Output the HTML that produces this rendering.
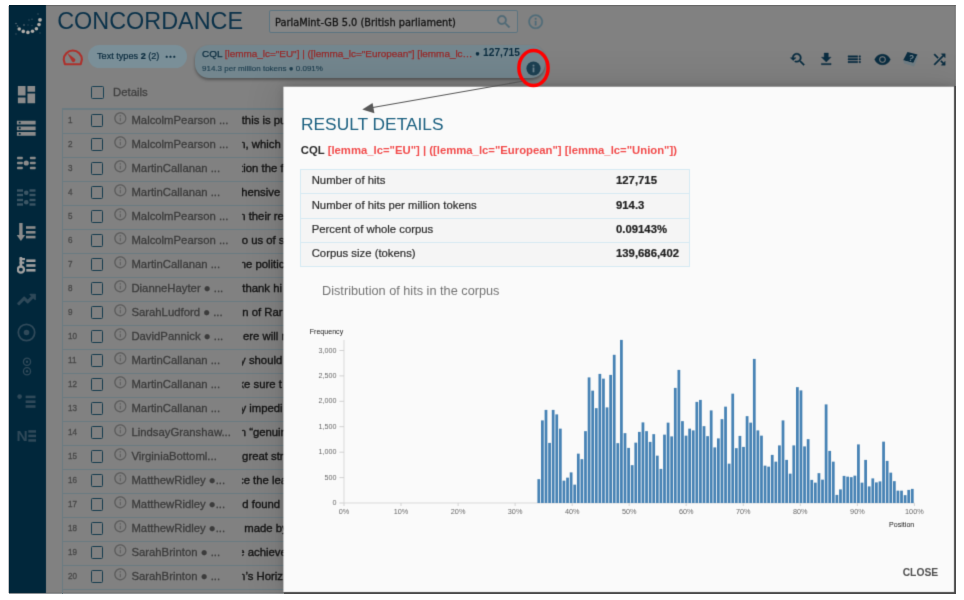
<!DOCTYPE html>
<html lang="en"><head><meta charset="utf-8"><title>Concordance - Result details</title>
<style>
*{box-sizing:border-box}
html,body{margin:0;padding:0}
body{width:964px;height:600px;background:#fff;position:relative;overflow:hidden;font-family:"Liberation Sans",Arial,sans-serif;}
.a{position:absolute}
#shot{left:9px;top:5px;width:947px;height:589px;overflow:hidden;filter:url(#soft)}
#bg{left:0;top:0;width:946px;height:588px;background:#818181}
#side{left:0;top:0;width:37px;height:588px;background:#01273b}
#title{left:48.2px;top:1.3px;font-size:23.4px;line-height:30px;color:#0a3149;white-space:nowrap}
#sel{left:260.3px;top:4.8px;width:249px;height:22.8px;border:1.5px solid #5b7480;border-radius:2px;background:#868686}
#seltxt{-webkit-text-stroke:.3px;left:266px;top:5.6px;height:23px;line-height:23px;font-size:10.9px;color:#141414;white-space:nowrap;font-family:"DejaVu Sans Condensed","DejaVu Sans","Liberation Sans",sans-serif}
.chip{background:#7a8f98;border-radius:12px}
.row{left:53.4px;width:892px;height:24px;border-top:1px solid #6a7a81;border-left:1px solid #6a7a81}
.r1{box-shadow:0 -1px 0 #6a7a81}
.r1:before{content:'';position:absolute;left:-1px;top:-1.5px;width:1px;height:2px;background:#6a7a81}
.num{left:5px;top:-2.9px;height:24px;line-height:25px;font-size:9.4px;color:#4a4a4a;-webkit-text-stroke:.35px;transform:scaleX(.86);transform-origin:0 50%}
.cb{left:27.2px;top:4.1px;width:12.3px;height:12.9px;border:1.6px solid #153b4d;border-radius:1.5px}
.nm{left:68px;top:-2.4px;height:24px;line-height:24px;font-size:11.33px;color:#3c3c3c;-webkit-text-stroke:.3px;white-space:nowrap}
.kw{left:179.1px;top:-2.4px;width:60px;height:24px;line-height:24px;font-size:11.33px;color:#141414;-webkit-text-stroke:.35px;white-space:nowrap;overflow:hidden}
.kw span{position:absolute;top:0}
.ii{left:50.1px;top:0.7px}
#modal{left:275px;top:82px;width:670px;height:505px;background:#fafafa;box-shadow:0 0 9px rgba(0,0,0,.2),0 2px 34px 6px rgba(0,0,0,.11)}
#mt{left:17px;top:25.7px;font-size:17.33px;line-height:22px;color:#1b6080;white-space:nowrap}
#cql{left:16.8px;top:54.8px;font-size:11.32px;line-height:16px;font-weight:bold;color:#2b2b2b;white-space:nowrap}
#cql span{color:#f24c4c}
table{-webkit-text-stroke:.2px;position:absolute;left:16px;top:82px;border-collapse:collapse;font-size:11.33px;color:#2d2d2d}
td{border:1px solid #d6eaf3;height:24.25px;padding:0 0 2.6px 10.7px;background:#f5f5f5;white-space:nowrap}
td.v{font-weight:bold;border-left:none;width:73.5px;color:#222;padding-left:0}
td.k{border-right:none;width:315.5px}
#dist{left:38px;top:195.7px;font-size:12.73px;line-height:16px;color:#757575;white-space:nowrap}
#close{left:618.7px;top:478.8px;font-size:10.3px;line-height:14px;color:#4f4f4f;font-weight:bold}
</style></head>
<body>
<svg width="0" height="0" style="position:absolute"><defs><filter id="soft" x="0" y="0" width="100%" height="100%" color-interpolation-filters="sRGB"><feConvolveMatrix order="3" kernelMatrix="0 1 0 1 5 1 0 1 0" divisor="9" edgeMode="duplicate" preserveAlpha="true"/></filter></defs></svg>
<div class="a" style="left:8px;top:6px;width:1px;height:587px;background:rgba(40,40,50,.28)"></div>
<div id="shot" class="a">
<div id="bg" class="a"></div>
<div class="a" style="left:946px;top:0;width:1px;height:589px;background:rgba(80,80,80,.7)"></div><div class="a" style="left:0;top:588px;width:947px;height:1px;background:rgba(50,55,60,.55)"></div>
<div id="side" class="a"></div>
<svg class="a" style="left:0;top:0" width="37" height="40" viewBox="0 0 37 40"><circle cx="10.25" cy="24" r="1.8" fill="#b0aca8"/><circle cx="14.25" cy="26.4" r="1.8" fill="#b0aca8"/><circle cx="18.9" cy="27.4" r="1.8" fill="#b0aca8"/><circle cx="23.5" cy="26.2" r="1.8" fill="#b0aca8"/><circle cx="27.4" cy="23.8" r="1.8" fill="#b0aca8"/><circle cx="30" cy="19.6" r="1.8" fill="#b0aca8"/><circle cx="31" cy="14.8" r="1.9" fill="#b0aca8"/><circle cx="7" cy="18.5" r="0.8" fill="#5d6d76"/><circle cx="8.5" cy="21" r="0.8" fill="#5d6d76"/><circle cx="15" cy="20" r="0.9" fill="#4a5d68"/><circle cx="20" cy="15" r="0.8" fill="#35505f"/><circle cx="23" cy="14.3" r="0.8" fill="#35505f"/><circle cx="19" cy="20" r="0.8" fill="#2a4758"/><circle cx="23" cy="20.5" r="0.8" fill="#2a4758"/><circle cx="29" cy="9" r="0.8" fill="#3c5563"/><circle cx="7" cy="29" r="0.7" fill="#4a5d68"/><circle cx="31" cy="28" r="0.7" fill="#3c5563"/></svg>
<svg class="a" style="left:6.1px;top:78.2px" width="23" height="23" viewBox="0 0 24 24"><path d="M3 13h8V3H3v10zm0 8h8v-6H3v6zm10 0h8V11h-8v10zm0-18v6h8V3h-8z" fill="#8b8b8b"/></svg>
<svg class="a" style="left:6.35px;top:112.45px" width="22.5" height="22.5" viewBox="0 0 24 24"><path d="M2 20h20v-4H2v4zm2-3h2v2H4v-2zM2 4v4h20V4H2zm4 3H4V5h2v2zm-4 7h20v-4H2v4zm2-3h2v2H4v-2z" fill="#8b8b8b"/></svg>
<svg class="a" style="left:8.35px;top:149.3px" width="18.5" height="18" viewBox="0 0 18.5 18"><rect x="0" y="2.65" width="5.8" height="2.7" rx=".8" fill="#8b8b8b"/><rect x="12.9" y="2.65" width="5.8" height="2.7" rx=".8" fill="#8b8b8b"/><rect x="0" y="7.65" width="5.8" height="2.7" rx=".8" fill="#8b8b8b"/><rect x="12.9" y="7.65" width="5.8" height="2.7" rx=".8" fill="#8b8b8b"/><rect x="0" y="12.65" width="5.8" height="2.7" rx=".8" fill="#8b8b8b"/><rect x="12.9" y="12.65" width="5.8" height="2.7" rx=".8" fill="#8b8b8b"/><circle cx="9.25" cy="9" r="2.6" fill="#8b8b8b"/></svg>
<svg class="a" style="left:8.35px;top:183.55px" width="18.5" height="17.5" viewBox="0 0 18.5 17.5"><rect x="0" y="0.30000000000000004" width="6" height="2.4" fill="#3b5564"/><rect x="12.5" y="0.30000000000000004" width="6" height="2.4" fill="#3b5564"/><rect x="0" y="4.8" width="6" height="2.4" fill="#3b5564"/><rect x="12.5" y="4.8" width="6" height="2.4" fill="#3b5564"/><circle cx="9.25" cy="3.8" r="2.3" fill="#3b5564"/><rect x="0" y="9.8" width="6" height="2.4" fill="#3b5564"/><rect x="12.5" y="9.8" width="6" height="2.4" fill="#3b5564"/><rect x="0" y="14.3" width="6" height="2.4" fill="#3b5564"/><rect x="12.5" y="14.3" width="6" height="2.4" fill="#3b5564"/><circle cx="9.25" cy="13.3" r="2.3" fill="#3b5564"/></svg>
<svg class="a" style="left:8.35px;top:217.6px" width="18.5" height="18" viewBox="0 0 18.5 18"><path d="M2.2 0h3.4v12h2.6l-4.3 6l-4.3-6h2.6z" fill="#8b8b8b"/><rect x="9" y="3.2" width="9.5" height="2.6" fill="#8b8b8b"/><rect x="9" y="8" width="9.5" height="2.6" fill="#8b8b8b"/><rect x="9" y="12.8" width="9.5" height="2.6" fill="#8b8b8b"/></svg>
<svg class="a" style="left:8.35px;top:252px" width="18.5" height="17" viewBox="0 0 18.5 17"><rect x="2.6" y="0" width="2.6" height="10" fill="#a0a0a0"/><rect x="2.6" y="1" width="5.4" height="2.2" fill="#a0a0a0"/><rect x="2.6" y="4.6" width="4.6" height="2.2" fill="#a0a0a0"/><circle cx="3.9" cy="12.6" r="3.1" fill="none" stroke="#a0a0a0" stroke-width="2.3"/><rect x="9.3" y="2.4" width="9.2" height="2.6" fill="#a0a0a0"/><rect x="9.3" y="7.2" width="9.2" height="2.6" fill="#a0a0a0"/><rect x="9.3" y="12" width="9.2" height="2.6" fill="#a0a0a0"/></svg>
<svg class="a" style="left:7.3px;top:284.1px" width="21" height="21" viewBox="0 0 24 24" stroke="#2f4959" stroke-width="1.3" stroke-linejoin="round"><path d="M16 6l2.29 2.29-4.88 4.88-4-4L2 16.59 3.41 18l6-6 4 4 6.3-6.29L22 12V6z" fill="#2f4959"/></svg>
<svg class="a" style="left:8.1px;top:318.3px" width="19" height="19" viewBox="0 0 19 19"><circle cx="9.5" cy="9.5" r="8.2" fill="none" stroke="#2f4959" stroke-width="1.8"/><circle cx="9.5" cy="9.5" r="2.8" fill="#2f4959"/></svg>
<svg class="a" style="left:12.6px;top:352.2px" width="10" height="19" viewBox="0 0 10 19"><circle cx="5" cy="4.8" r="3.6" fill="none" stroke="#2f4959" stroke-width="1.3"/><circle cx="5" cy="4.8" r="1.2" fill="#2f4959"/><circle cx="5" cy="14.2" r="3.6" fill="none" stroke="#2f4959" stroke-width="1.3"/><circle cx="5" cy="14.2" r="1.2" fill="#2f4959"/></svg>
<svg class="a" style="left:8.35px;top:388.5px" width="18.5" height="14" viewBox="0 0 18.5 14"><circle cx="2.6" cy="2.6" r="2.3" fill="#2f4959"/><rect x="8.6" y="1.6" width="9.9" height="2.6" fill="#2f4959"/><rect x="8.6" y="6.4" width="9.9" height="2.6" fill="#2f4959"/><rect x="8.6" y="11.2" width="9.9" height="2.6" fill="#2f4959"/></svg>
<svg class="a" style="left:8.1px;top:423.8px" width="19" height="13" viewBox="0 0 19 13"><text x="-0.6" y="12" font-size="15.5" font-weight="bold" font-family="Liberation Sans, Arial, sans-serif" fill="#2f4959">N</text><rect x="11.3" y="1.2" width="7.7" height="2.5" fill="#2f4959"/><rect x="11.3" y="5.7" width="7.7" height="2.5" fill="#2f4959"/><rect x="11.3" y="10.2" width="7.7" height="2.5" fill="#2f4959"/></svg>
<div id="title" class="a">CONCORDANCE</div>
<div id="sel" class="a"></div><div id="seltxt" class="a">ParlaMint-GB 5.0 (British parliament)</div>
<svg class="a" style="left:485.55px;top:7.95px" width="17.5" height="17.5" viewBox="0 0 24 24" stroke="#506a76" stroke-width=".5"><path d="M15.5 14h-.79l-.28-.27C15.41 12.59 16 11.11 16 9.5 16 5.91 13.09 3 9.5 3S3 5.91 3 9.5 5.91 16 9.5 16c1.61 0 3.09-.59 4.23-1.57l.27.28v.79l5 4.99L20.49 19l-4.99-5zm-6 0C7.01 14 5 11.99 5 9.5S7.01 5 9.5 5 14 7.01 14 9.5 11.99 14 9.5 14z" fill="#506a76"/></svg>
<svg class="a" style="left:518.25px;top:8.05px" width="17.3" height="17.3" viewBox="0 0 24 24" stroke="#506c79" stroke-width=".5"><path d="M11 17h2v-6h-2v6zm1-15C6.48 2 2 6.48 2 12s4.48 10 10 10 10-4.48 10-10S17.52 2 12 2zm0 18c-4.41 0-8-3.59-8-8s3.59-8 8-8 8 3.59 8 8-3.59 8-8 8zM11 9h2V7h-2v2z" fill="#506c79"/></svg>
<svg class="a" style="left:0;top:0" width="100" height="80" viewBox="9 5 100 80"><path d="M64.9 64.3 L63.7 59.6 A9.1 9.1 0 0 1 81.9 59.6 L80.7 64.3 Z" fill="none" stroke="#ad312c" stroke-width="2.1" stroke-linejoin="round"/><path d="M67.2 53 L74.6 58.6 A1.9 1.9 0 1 1 71.9 61.2 Z" fill="#ad312c"/></svg>
<div class="a chip" style="left:79.3px;top:40px;width:99px;height:22.6px"></div>
<div class="a" style="left:88px;top:40px;height:22.6px;line-height:22.6px;font-size:9.15px;color:#0b2c3f;-webkit-text-stroke:.2px;white-space:nowrap">Text types <b>2</b> (2) <span style="letter-spacing:1px;font-size:4.6px;position:relative;top:-1.2px;left:3.5px">●●●</span></div>
<div class="a chip" style="left:186px;top:40px;width:350px;height:33px;border-radius:14px;background:#73868e;box-shadow:0 2px 3px rgba(0,0,0,.35)"></div>
<div class="a" style="left:193px;top:41.5px;height:14px;line-height:14px;font-size:9.94px;color:#0b2c3f;white-space:nowrap;-webkit-text-stroke:.25px">CQL <span style="color:#982a2a">[lemma_lc="EU"] | ([lemma_lc="European"] [lemma_lc…</span> <span style="font-size:7.5px;position:relative;top:-1px">●</span></div>
<div class="a" style="left:440px;width:70.9px;text-align:right;top:40.6px;height:14px;line-height:14px;font-size:10.2px;font-weight:bold;color:#0b2c3f;white-space:nowrap">127,715</div>
<div class="a" style="left:193px;top:58.7px;height:10px;line-height:10px;font-size:8px;color:#1f3f50;-webkit-text-stroke:.15px;white-space:nowrap">914.3 per million tokens ● 0.091%</div>
<svg class="a" style="left:516.5px;top:55.5px" width="15" height="15" viewBox="0 0 15 15"><circle cx="7.5" cy="7.5" r="7.1" fill="#1c4052"/><rect x="6.6" y="6.5" width="1.8" height="4.8" fill="#6c838e"/><rect x="6.6" y="3.7" width="1.8" height="1.8" fill="#6c838e"/></svg>
<svg class="a" style="left:780px;top:45.8px" width="17" height="17" viewBox="0 0 24 24" stroke="#0a2d41" stroke-width=".6"><path d="M17.01 14h-.8l-.27-.27c.98-1.14 1.57-2.61 1.57-4.23 0-3.59-2.91-6.5-6.5-6.5s-6.5 3-6.5 6.5H2l3.84 4 4.16-4H6.51C6.51 7 8.53 5 11.01 5s4.5 2.01 4.5 4.5c0 2.48-2.02 4.5-4.5 4.5-.65 0-1.26-.14-1.82-.38L7.71 15.1c.97.57 2.09.9 3.3.9 1.61 0 3.08-.59 4.22-1.57l.27.27v.79l5.01 4.99L22 19l-4.99-5z" fill="#0a2d41"/></svg>
<svg class="a" style="left:808.75px;top:45.75px" width="16.5" height="16.5" viewBox="0 0 24 24" stroke="#0a2d41" stroke-width=".6"><path d="M19 9h-4V3H9v6H5l7 7 7-7zM5 18v2h14v-2H5z" fill="#0a2d41"/></svg>
<svg class="a" style="left:837.25px;top:46.45px" width="16.5" height="16.5" viewBox="0 0 24 24" stroke="#0a2d41" stroke-width=".6"><path d="M3 9h14V7H3v2zm0 4h14v-2H3v2zm0 4h14v-2H3v2zm16 0h2v-2h-2v2zm0-10v2h2V7h-2zm0 6h2v-2h-2v2z" fill="#0a2d41"/></svg>
<svg class="a" style="left:865.2px;top:46px" width="17" height="17" viewBox="0 0 24 24" stroke="#0a2d41" stroke-width=".6"><path d="M12 4.5C7 4.5 2.73 7.61 1 12c1.73 4.39 6 7.5 11 7.5s9.27-3.11 11-7.5c-1.73-4.39-6-7.5-11-7.5zM12 17c-2.76 0-5-2.24-5-5s2.24-5 5-5 5 2.24 5 5-2.24 5-5 5zm0-8c-1.66 0-3 1.34-3 3s1.34 3 3 3 3-1.34 3-3-1.34-3-3-3z" fill="#0a2d41"/></svg>
<svg class="a" style="left:892.5px;top:45.5px" width="17" height="17" viewBox="0 0 17 17"><path d="M5.5 1 L15.5 3.6 L11.3 12 L1.2 9.2 Z" fill="#0a2d41"/><path d="M1.2 9.2 L11.3 12 L15.5 3.6 L16 6.4 L12 15.6 L2.2 12.4 Z" fill="#6f7d84"/><text x="6.6" y="9.6" font-size="8.5" font-weight="bold" font-family="Liberation Sans, Arial, sans-serif" fill="#73868f" transform="rotate(14 8 7)">?</text></svg>
<svg class="a" style="left:921.8px;top:46px" width="17" height="17" viewBox="0 0 24 24" stroke="#0a2d41" stroke-width=".6"><path d="M10.59 9.17L5.41 4 4 5.41l5.17 5.17 1.42-1.41zM14.5 4l2.04 2.04L4 18.59 5.41 20 17.96 7.46 20 9.5V4h-5.5zm.33 9.41l-1.41 1.41 3.13 3.13L14.5 20H20v-5.5l-2.04 2.04-3.13-3.13z" fill="#0a2d41"/></svg>
<div class="a" style="left:82px;top:80.5px;width:12.5px;height:13.4px;border:1.5px solid #173f52;border-radius:1.5px"></div>
<div class="a" style="left:104px;top:79.5px;font-size:11.33px;line-height:15px;color:#404040;-webkit-text-stroke:.3px">Details</div>
<div class="a row r1" style="top:103.9px"><div class="a num">1</div><div class="a cb"></div><svg class="a ii" width="14.6" height="14.6" viewBox="0 0 24 24"><path d="M11.2 17h1.6v-6h-1.6v6zm1-15C6.48 2 2 6.48 2 12s4.48 10 10 10 10-4.48 10-10S17.52 2 12 2zm0 18c-4.41 0-8-3.59-8-8s3.59-8 8-8 8 3.59 8 8-3.59 8-8 8zM11 9h2V7h-2v2z" fill="#5b5b5b"/></svg><div class="a nm">MalcolmPearson ...</div><div class="a kw"><span style="left:-0.8px">this is pu</span></div></div>
<div class="a row" style="top:127.9px"><div class="a num">2</div><div class="a cb"></div><svg class="a ii" width="14.6" height="14.6" viewBox="0 0 24 24"><path d="M11.2 17h1.6v-6h-1.6v6zm1-15C6.48 2 2 6.48 2 12s4.48 10 10 10 10-4.48 10-10S17.52 2 12 2zm0 18c-4.41 0-8-3.59-8-8s3.59-8 8-8 8 3.59 8 8-3.59 8-8 8zM11 9h2V7h-2v2z" fill="#5b5b5b"/></svg><div class="a nm">MalcolmPearson ...</div><div class="a kw"><span style="left:-3.3px">n, which</span></div></div>
<div class="a row" style="top:151.9px"><div class="a num">3</div><div class="a cb"></div><svg class="a ii" width="14.6" height="14.6" viewBox="0 0 24 24"><path d="M11.2 17h1.6v-6h-1.6v6zm1-15C6.48 2 2 6.48 2 12s4.48 10 10 10 10-4.48 10-10S17.52 2 12 2zm0 18c-4.41 0-8-3.59-8-8s3.59-8 8-8 8 3.59 8 8-3.59 8-8 8zM11 9h2V7h-2v2z" fill="#5b5b5b"/></svg><div class="a nm">MartinCallanan ...</div><div class="a kw"><span style="left:-2.4px">tion the f</span></div></div>
<div class="a row" style="top:175.9px"><div class="a num">4</div><div class="a cb"></div><svg class="a ii" width="14.6" height="14.6" viewBox="0 0 24 24"><path d="M11.2 17h1.6v-6h-1.6v6zm1-15C6.48 2 2 6.48 2 12s4.48 10 10 10 10-4.48 10-10S17.52 2 12 2zm0 18c-4.41 0-8-3.59-8-8s3.59-8 8-8 8 3.59 8 8-3.59 8-8 8zM11 9h2V7h-2v2z" fill="#5b5b5b"/></svg><div class="a nm">MartinCallanan ...</div><div class="a kw"><span style="left:-1.3px">hensive</span></div></div>
<div class="a row" style="top:199.9px"><div class="a num">5</div><div class="a cb"></div><svg class="a ii" width="14.6" height="14.6" viewBox="0 0 24 24"><path d="M11.2 17h1.6v-6h-1.6v6zm1-15C6.48 2 2 6.48 2 12s4.48 10 10 10 10-4.48 10-10S17.52 2 12 2zm0 18c-4.41 0-8-3.59-8-8s3.59-8 8-8 8 3.59 8 8-3.59 8-8 8zM11 9h2V7h-2v2z" fill="#5b5b5b"/></svg><div class="a nm">MalcolmPearson ...</div><div class="a kw"><span style="left:-3.3px">n their re</span></div></div>
<div class="a row" style="top:223.9px"><div class="a num">6</div><div class="a cb"></div><svg class="a ii" width="14.6" height="14.6" viewBox="0 0 24 24"><path d="M11.2 17h1.6v-6h-1.6v6zm1-15C6.48 2 2 6.48 2 12s4.48 10 10 10 10-4.48 10-10S17.52 2 12 2zm0 18c-4.41 0-8-3.59-8-8s3.59-8 8-8 8 3.59 8 8-3.59 8-8 8zM11 9h2V7h-2v2z" fill="#5b5b5b"/></svg><div class="a nm">MalcolmPearson ...</div><div class="a kw"><span style="left:-0.8px">o us of s</span></div></div>
<div class="a row" style="top:247.9px"><div class="a num">7</div><div class="a cb"></div><svg class="a ii" width="14.6" height="14.6" viewBox="0 0 24 24"><path d="M11.2 17h1.6v-6h-1.6v6zm1-15C6.48 2 2 6.48 2 12s4.48 10 10 10 10-4.48 10-10S17.52 2 12 2zm0 18c-4.41 0-8-3.59-8-8s3.59-8 8-8 8 3.59 8 8-3.59 8-8 8zM11 9h2V7h-2v2z" fill="#5b5b5b"/></svg><div class="a nm">MartinCallanan ...</div><div class="a kw"><span style="left:-2.8px">ne politic</span></div></div>
<div class="a row" style="top:271.9px"><div class="a num">8</div><div class="a cb"></div><svg class="a ii" width="14.6" height="14.6" viewBox="0 0 24 24"><path d="M11.2 17h1.6v-6h-1.6v6zm1-15C6.48 2 2 6.48 2 12s4.48 10 10 10 10-4.48 10-10S17.52 2 12 2zm0 18c-4.41 0-8-3.59-8-8s3.59-8 8-8 8 3.59 8 8-3.59 8-8 8zM11 9h2V7h-2v2z" fill="#5b5b5b"/></svg><div class="a nm">DianneHayter ● ...</div><div class="a kw"><span style="left:-0.2px">thank hi</span></div></div>
<div class="a row" style="top:295.9px"><div class="a num">9</div><div class="a cb"></div><svg class="a ii" width="14.6" height="14.6" viewBox="0 0 24 24"><path d="M11.2 17h1.6v-6h-1.6v6zm1-15C6.48 2 2 6.48 2 12s4.48 10 10 10 10-4.48 10-10S17.52 2 12 2zm0 18c-4.41 0-8-3.59-8-8s3.59-8 8-8 8 3.59 8 8-3.59 8-8 8zM11 9h2V7h-2v2z" fill="#5b5b5b"/></svg><div class="a nm">SarahLudford ● ...</div><div class="a kw"><span style="left:-0.2px">n of Rar</span></div></div>
<div class="a row" style="top:319.9px"><div class="a num">10</div><div class="a cb"></div><svg class="a ii" width="14.6" height="14.6" viewBox="0 0 24 24"><path d="M11.2 17h1.6v-6h-1.6v6zm1-15C6.48 2 2 6.48 2 12s4.48 10 10 10 10-4.48 10-10S17.52 2 12 2zm0 18c-4.41 0-8-3.59-8-8s3.59-8 8-8 8 3.59 8 8-3.59 8-8 8zM11 9h2V7h-2v2z" fill="#5b5b5b"/></svg><div class="a nm">DavidPannick ● ...</div><div class="a kw"><span style="left:0.5px">ere will r</span></div></div>
<div class="a row" style="top:343.9px"><div class="a num">11</div><div class="a cb"></div><svg class="a ii" width="14.6" height="14.6" viewBox="0 0 24 24"><path d="M11.2 17h1.6v-6h-1.6v6zm1-15C6.48 2 2 6.48 2 12s4.48 10 10 10 10-4.48 10-10S17.52 2 12 2zm0 18c-4.41 0-8-3.59-8-8s3.59-8 8-8 8 3.59 8 8-3.59 8-8 8zM11 9h2V7h-2v2z" fill="#5b5b5b"/></svg><div class="a nm">MartinCallanan ...</div><div class="a kw"><span style="left:-2.4px">y should</span></div></div>
<div class="a row" style="top:367.9px"><div class="a num">12</div><div class="a cb"></div><svg class="a ii" width="14.6" height="14.6" viewBox="0 0 24 24"><path d="M11.2 17h1.6v-6h-1.6v6zm1-15C6.48 2 2 6.48 2 12s4.48 10 10 10 10-4.48 10-10S17.52 2 12 2zm0 18c-4.41 0-8-3.59-8-8s3.59-8 8-8 8 3.59 8 8-3.59 8-8 8zM11 9h2V7h-2v2z" fill="#5b5b5b"/></svg><div class="a nm">MartinCallanan ...</div><div class="a kw"><span style="left:-4.1px">ke sure t</span></div></div>
<div class="a row" style="top:391.9px"><div class="a num">13</div><div class="a cb"></div><svg class="a ii" width="14.6" height="14.6" viewBox="0 0 24 24"><path d="M11.2 17h1.6v-6h-1.6v6zm1-15C6.48 2 2 6.48 2 12s4.48 10 10 10 10-4.48 10-10S17.52 2 12 2zm0 18c-4.41 0-8-3.59-8-8s3.59-8 8-8 8 3.59 8 8-3.59 8-8 8zM11 9h2V7h-2v2z" fill="#5b5b5b"/></svg><div class="a nm">MartinCallanan ...</div><div class="a kw"><span style="left:-2.1px">y impedi</span></div></div>
<div class="a row" style="top:415.9px"><div class="a num">14</div><div class="a cb"></div><svg class="a ii" width="14.6" height="14.6" viewBox="0 0 24 24"><path d="M11.2 17h1.6v-6h-1.6v6zm1-15C6.48 2 2 6.48 2 12s4.48 10 10 10 10-4.48 10-10S17.52 2 12 2zm0 18c-4.41 0-8-3.59-8-8s3.59-8 8-8 8 3.59 8 8-3.59 8-8 8zM11 9h2V7h-2v2z" fill="#5b5b5b"/></svg><div class="a nm">LindsayGranshaw...</div><div class="a kw"><span style="left:-2.8px">n “genuir</span></div></div>
<div class="a row" style="top:439.9px"><div class="a num">15</div><div class="a cb"></div><svg class="a ii" width="14.6" height="14.6" viewBox="0 0 24 24"><path d="M11.2 17h1.6v-6h-1.6v6zm1-15C6.48 2 2 6.48 2 12s4.48 10 10 10 10-4.48 10-10S17.52 2 12 2zm0 18c-4.41 0-8-3.59-8-8s3.59-8 8-8 8 3.59 8 8-3.59 8-8 8zM11 9h2V7h-2v2z" fill="#5b5b5b"/></svg><div class="a nm">VirginiaBottoml...</div><div class="a kw"><span style="left:-0.4px">great str</span></div></div>
<div class="a row" style="top:463.9px"><div class="a num">16</div><div class="a cb"></div><svg class="a ii" width="14.6" height="14.6" viewBox="0 0 24 24"><path d="M11.2 17h1.6v-6h-1.6v6zm1-15C6.48 2 2 6.48 2 12s4.48 10 10 10 10-4.48 10-10S17.52 2 12 2zm0 18c-4.41 0-8-3.59-8-8s3.59-8 8-8 8 3.59 8 8-3.59 8-8 8zM11 9h2V7h-2v2z" fill="#5b5b5b"/></svg><div class="a nm">MatthewRidley ●...</div><div class="a kw"><span style="left:-4.5px">ce the lea</span></div></div>
<div class="a row" style="top:487.9px"><div class="a num">17</div><div class="a cb"></div><svg class="a ii" width="14.6" height="14.6" viewBox="0 0 24 24"><path d="M11.2 17h1.6v-6h-1.6v6zm1-15C6.48 2 2 6.48 2 12s4.48 10 10 10 10-4.48 10-10S17.52 2 12 2zm0 18c-4.41 0-8-3.59-8-8s3.59-8 8-8 8 3.59 8 8-3.59 8-8 8zM11 9h2V7h-2v2z" fill="#5b5b5b"/></svg><div class="a nm">MatthewRidley ●...</div><div class="a kw"><span style="left:-0.2px">d found</span></div></div>
<div class="a row" style="top:511.9px"><div class="a num">18</div><div class="a cb"></div><svg class="a ii" width="14.6" height="14.6" viewBox="0 0 24 24"><path d="M11.2 17h1.6v-6h-1.6v6zm1-15C6.48 2 2 6.48 2 12s4.48 10 10 10 10-4.48 10-10S17.52 2 12 2zm0 18c-4.41 0-8-3.59-8-8s3.59-8 8-8 8 3.59 8 8-3.59 8-8 8zM11 9h2V7h-2v2z" fill="#5b5b5b"/></svg><div class="a nm">MatthewRidley ●...</div><div class="a kw"><span style="left:1.8px">made by</span></div></div>
<div class="a row" style="top:535.9px"><div class="a num">19</div><div class="a cb"></div><svg class="a ii" width="14.6" height="14.6" viewBox="0 0 24 24"><path d="M11.2 17h1.6v-6h-1.6v6zm1-15C6.48 2 2 6.48 2 12s4.48 10 10 10 10-4.48 10-10S17.52 2 12 2zm0 18c-4.41 0-8-3.59-8-8s3.59-8 8-8 8 3.59 8 8-3.59 8-8 8zM11 9h2V7h-2v2z" fill="#5b5b5b"/></svg><div class="a nm">SarahBrinton ● ...</div><div class="a kw"><span style="left:-4.2px">e achieve</span></div></div>
<div class="a row" style="top:559.9px"><div class="a num">20</div><div class="a cb"></div><svg class="a ii" width="14.6" height="14.6" viewBox="0 0 24 24"><path d="M11.2 17h1.6v-6h-1.6v6zm1-15C6.48 2 2 6.48 2 12s4.48 10 10 10 10-4.48 10-10S17.52 2 12 2zm0 18c-4.41 0-8-3.59-8-8s3.59-8 8-8 8 3.59 8 8-3.59 8-8 8zM11 9h2V7h-2v2z" fill="#5b5b5b"/></svg><div class="a nm">SarahBrinton ● ...</div><div class="a kw"><span style="left:-3.4px">n’s Horiz</span></div></div>
<div class="a row" style="top:583.9px;height:10px"></div>
<div id="modal" class="a">
<svg class="a" style="left:-275px;top:-82px" width="946" height="588" viewBox="9 5 946 588"><rect x="283.4" y="86.7" width="670.6" height="505.4" fill="#fafafa"/></svg>
<div id="mt" class="a">RESULT DETAILS</div>
<div id="cql" class="a">CQL <span>[lemma_lc="EU"] | ([lemma_lc="European"] [lemma_lc="Union"])</span></div>
<table><tr><td class="k">Number of hits</td><td class="v">127,715</td></tr><tr><td class="k">Number of hits per million tokens</td><td class="v">914.3</td></tr><tr><td class="k">Percent of whole corpus</td><td class="v">0.09143%</td></tr><tr><td class="k">Corpus size (tokens)</td><td class="v">139,686,402</td></tr></table>
<div id="dist" class="a">Distribution of hits in the corpus</div>
<svg class="a" style="left:-275px;top:-82px" width="946" height="588" viewBox="9 5 946 588" font-family="Liberation Sans, Arial, sans-serif"><path d="M344.0 340.0V503.0H914.4" fill="none" stroke="#d9d9d9" stroke-width="1"/><line x1="339.4" x2="344.0" y1="503.0" y2="503.0" stroke="#d2d2d2"/><text x="336.4" y="505.1" font-size="7.2" fill="#6a6a6a" text-anchor="end">0</text><line x1="339.4" x2="344.0" y1="477.6" y2="477.6" stroke="#d2d2d2"/><text x="336.4" y="479.7" font-size="7.2" fill="#6a6a6a" text-anchor="end">500</text><line x1="339.4" x2="344.0" y1="452.2" y2="452.2" stroke="#d2d2d2"/><text x="336.4" y="454.3" font-size="7.2" fill="#6a6a6a" text-anchor="end">1,000</text><line x1="339.4" x2="344.0" y1="426.7" y2="426.7" stroke="#d2d2d2"/><text x="336.4" y="428.8" font-size="7.2" fill="#6a6a6a" text-anchor="end">1,500</text><line x1="339.4" x2="344.0" y1="401.3" y2="401.3" stroke="#d2d2d2"/><text x="336.4" y="403.4" font-size="7.2" fill="#6a6a6a" text-anchor="end">2,000</text><line x1="339.4" x2="344.0" y1="375.9" y2="375.9" stroke="#d2d2d2"/><text x="336.4" y="378.0" font-size="7.2" fill="#6a6a6a" text-anchor="end">2,500</text><line x1="339.4" x2="344.0" y1="350.5" y2="350.5" stroke="#d2d2d2"/><text x="336.4" y="352.6" font-size="7.2" fill="#6a6a6a" text-anchor="end">3,000</text><line x1="344.0" x2="344.0" y1="503.0" y2="506.0" stroke="#d2d2d2"/><text x="344.0" y="513.6" font-size="7.3" fill="#6a6a6a" text-anchor="middle">0%</text><line x1="401.0" x2="401.0" y1="503.0" y2="506.0" stroke="#d2d2d2"/><text x="401.0" y="513.6" font-size="7.3" fill="#6a6a6a" text-anchor="middle">10%</text><line x1="458.1" x2="458.1" y1="503.0" y2="506.0" stroke="#d2d2d2"/><text x="458.1" y="513.6" font-size="7.3" fill="#6a6a6a" text-anchor="middle">20%</text><line x1="515.1" x2="515.1" y1="503.0" y2="506.0" stroke="#d2d2d2"/><text x="515.1" y="513.6" font-size="7.3" fill="#6a6a6a" text-anchor="middle">30%</text><line x1="572.2" x2="572.2" y1="503.0" y2="506.0" stroke="#d2d2d2"/><text x="572.2" y="513.6" font-size="7.3" fill="#6a6a6a" text-anchor="middle">40%</text><line x1="629.2" x2="629.2" y1="503.0" y2="506.0" stroke="#d2d2d2"/><text x="629.2" y="513.6" font-size="7.3" fill="#6a6a6a" text-anchor="middle">50%</text><line x1="686.2" x2="686.2" y1="503.0" y2="506.0" stroke="#d2d2d2"/><text x="686.2" y="513.6" font-size="7.3" fill="#6a6a6a" text-anchor="middle">60%</text><line x1="743.3" x2="743.3" y1="503.0" y2="506.0" stroke="#d2d2d2"/><text x="743.3" y="513.6" font-size="7.3" fill="#6a6a6a" text-anchor="middle">70%</text><line x1="800.3" x2="800.3" y1="503.0" y2="506.0" stroke="#d2d2d2"/><text x="800.3" y="513.6" font-size="7.3" fill="#6a6a6a" text-anchor="middle">80%</text><line x1="857.4" x2="857.4" y1="503.0" y2="506.0" stroke="#d2d2d2"/><text x="857.4" y="513.6" font-size="7.3" fill="#6a6a6a" text-anchor="middle">90%</text><line x1="914.4" x2="914.4" y1="503.0" y2="506.0" stroke="#d2d2d2"/><text x="914.4" y="513.6" font-size="7.3" fill="#6a6a6a" text-anchor="middle">100%</text><text x="309.7" y="334.3" font-size="7.1" fill="#222">Frequency</text><text x="914.3" y="527.0" font-size="7.1" fill="#222" text-anchor="end">Position</text><rect x="537.42" y="479.15" width="2.75" height="23.85" fill="#4682b4"/><rect x="541.02" y="420.40" width="2.75" height="82.60" fill="#4682b4"/><rect x="544.61" y="409.90" width="2.75" height="93.10" fill="#4682b4"/><rect x="548.20" y="442.90" width="2.75" height="60.10" fill="#4682b4"/><rect x="551.79" y="409.90" width="2.75" height="93.10" fill="#4682b4"/><rect x="555.38" y="414.40" width="2.75" height="88.60" fill="#4682b4"/><rect x="558.97" y="428.65" width="2.75" height="74.35" fill="#4682b4"/><rect x="562.56" y="480.65" width="2.75" height="22.35" fill="#4682b4"/><rect x="566.16" y="477.65" width="2.75" height="25.35" fill="#4682b4"/><rect x="569.75" y="472.40" width="2.75" height="30.60" fill="#4682b4"/><rect x="573.34" y="484.65" width="2.75" height="18.35" fill="#4682b4"/><rect x="576.93" y="453.65" width="2.75" height="49.35" fill="#4682b4"/><rect x="580.52" y="459.15" width="2.75" height="43.85" fill="#4682b4"/><rect x="584.11" y="431.15" width="2.75" height="71.85" fill="#4682b4"/><rect x="587.70" y="377.40" width="2.75" height="125.60" fill="#4682b4"/><rect x="591.30" y="390.65" width="2.75" height="112.35" fill="#4682b4"/><rect x="594.89" y="408.15" width="2.75" height="94.85" fill="#4682b4"/><rect x="598.48" y="373.90" width="2.75" height="129.10" fill="#4682b4"/><rect x="602.07" y="378.65" width="2.75" height="124.35" fill="#4682b4"/><rect x="605.66" y="407.40" width="2.75" height="95.60" fill="#4682b4"/><rect x="609.25" y="374.90" width="2.75" height="128.10" fill="#4682b4"/><rect x="612.84" y="354.80" width="2.75" height="148.20" fill="#4682b4"/><rect x="616.43" y="443.15" width="2.75" height="59.85" fill="#4682b4"/><rect x="620.03" y="339.90" width="2.75" height="163.10" fill="#4682b4"/><rect x="623.62" y="433.15" width="2.75" height="69.85" fill="#4682b4"/><rect x="627.21" y="447.90" width="2.75" height="55.10" fill="#4682b4"/><rect x="630.80" y="465.15" width="2.75" height="37.85" fill="#4682b4"/><rect x="634.39" y="442.65" width="2.75" height="60.35" fill="#4682b4"/><rect x="637.98" y="431.90" width="2.75" height="71.10" fill="#4682b4"/><rect x="641.57" y="422.40" width="2.75" height="80.60" fill="#4682b4"/><rect x="645.17" y="431.15" width="2.75" height="71.85" fill="#4682b4"/><rect x="648.76" y="441.90" width="2.75" height="61.10" fill="#4682b4"/><rect x="652.35" y="434.15" width="2.75" height="68.85" fill="#4682b4"/><rect x="655.94" y="455.65" width="2.75" height="47.35" fill="#4682b4"/><rect x="659.53" y="468.90" width="2.75" height="34.10" fill="#4682b4"/><rect x="663.12" y="434.65" width="2.75" height="68.35" fill="#4682b4"/><rect x="666.71" y="422.65" width="2.75" height="80.35" fill="#4682b4"/><rect x="670.30" y="436.40" width="2.75" height="66.60" fill="#4682b4"/><rect x="673.90" y="387.90" width="2.75" height="115.10" fill="#4682b4"/><rect x="677.49" y="369.90" width="2.75" height="133.10" fill="#4682b4"/><rect x="681.08" y="421.15" width="2.75" height="81.85" fill="#4682b4"/><rect x="684.67" y="435.65" width="2.75" height="67.35" fill="#4682b4"/><rect x="688.26" y="428.65" width="2.75" height="74.35" fill="#4682b4"/><rect x="691.85" y="430.40" width="2.75" height="72.60" fill="#4682b4"/><rect x="695.44" y="401.90" width="2.75" height="101.10" fill="#4682b4"/><rect x="699.04" y="399.90" width="2.75" height="103.10" fill="#4682b4"/><rect x="702.63" y="426.15" width="2.75" height="76.85" fill="#4682b4"/><rect x="706.22" y="436.15" width="2.75" height="66.85" fill="#4682b4"/><rect x="709.81" y="410.40" width="2.75" height="92.60" fill="#4682b4"/><rect x="713.40" y="447.40" width="2.75" height="55.60" fill="#4682b4"/><rect x="716.99" y="438.40" width="2.75" height="64.60" fill="#4682b4"/><rect x="720.58" y="419.15" width="2.75" height="83.85" fill="#4682b4"/><rect x="724.17" y="406.65" width="2.75" height="96.35" fill="#4682b4"/><rect x="727.77" y="463.65" width="2.75" height="39.35" fill="#4682b4"/><rect x="731.36" y="393.65" width="2.75" height="109.35" fill="#4682b4"/><rect x="734.95" y="448.15" width="2.75" height="54.85" fill="#4682b4"/><rect x="738.54" y="435.90" width="2.75" height="67.10" fill="#4682b4"/><rect x="742.13" y="446.90" width="2.75" height="56.10" fill="#4682b4"/><rect x="745.72" y="416.15" width="2.75" height="86.85" fill="#4682b4"/><rect x="749.31" y="422.65" width="2.75" height="80.35" fill="#4682b4"/><rect x="752.91" y="358.90" width="2.75" height="144.10" fill="#4682b4"/><rect x="756.50" y="430.40" width="2.75" height="72.60" fill="#4682b4"/><rect x="760.09" y="435.65" width="2.75" height="67.35" fill="#4682b4"/><rect x="763.68" y="465.65" width="2.75" height="37.35" fill="#4682b4"/><rect x="767.27" y="466.65" width="2.75" height="36.35" fill="#4682b4"/><rect x="770.86" y="454.90" width="2.75" height="48.10" fill="#4682b4"/><rect x="774.45" y="461.65" width="2.75" height="41.35" fill="#4682b4"/><rect x="778.05" y="445.40" width="2.75" height="57.60" fill="#4682b4"/><rect x="781.64" y="420.40" width="2.75" height="82.60" fill="#4682b4"/><rect x="785.23" y="459.90" width="2.75" height="43.10" fill="#4682b4"/><rect x="788.82" y="473.65" width="2.75" height="29.35" fill="#4682b4"/><rect x="792.41" y="445.40" width="2.75" height="57.60" fill="#4682b4"/><rect x="796.00" y="387.15" width="2.75" height="115.85" fill="#4682b4"/><rect x="799.59" y="390.40" width="2.75" height="112.60" fill="#4682b4"/><rect x="803.18" y="446.40" width="2.75" height="56.60" fill="#4682b4"/><rect x="806.78" y="439.15" width="2.75" height="63.85" fill="#4682b4"/><rect x="810.37" y="479.90" width="2.75" height="23.10" fill="#4682b4"/><rect x="813.96" y="482.65" width="2.75" height="20.35" fill="#4682b4"/><rect x="817.55" y="473.15" width="2.75" height="29.85" fill="#4682b4"/><rect x="821.14" y="479.65" width="2.75" height="23.35" fill="#4682b4"/><rect x="824.73" y="404.40" width="2.75" height="98.60" fill="#4682b4"/><rect x="828.32" y="450.90" width="2.75" height="52.10" fill="#4682b4"/><rect x="831.92" y="461.65" width="2.75" height="41.35" fill="#4682b4"/><rect x="835.51" y="494.90" width="2.75" height="8.10" fill="#4682b4"/><rect x="839.10" y="489.40" width="2.75" height="13.60" fill="#4682b4"/><rect x="842.69" y="475.90" width="2.75" height="27.10" fill="#4682b4"/><rect x="846.28" y="476.65" width="2.75" height="26.35" fill="#4682b4"/><rect x="849.87" y="477.15" width="2.75" height="25.85" fill="#4682b4"/><rect x="853.46" y="475.65" width="2.75" height="27.35" fill="#4682b4"/><rect x="857.05" y="444.40" width="2.75" height="58.60" fill="#4682b4"/><rect x="860.65" y="482.65" width="2.75" height="20.35" fill="#4682b4"/><rect x="864.24" y="459.90" width="2.75" height="43.10" fill="#4682b4"/><rect x="867.83" y="486.40" width="2.75" height="16.60" fill="#4682b4"/><rect x="871.42" y="478.40" width="2.75" height="24.60" fill="#4682b4"/><rect x="875.01" y="482.40" width="2.75" height="20.60" fill="#4682b4"/><rect x="878.60" y="481.40" width="2.75" height="21.60" fill="#4682b4"/><rect x="882.19" y="441.65" width="2.75" height="61.35" fill="#4682b4"/><rect x="885.79" y="460.90" width="2.75" height="42.10" fill="#4682b4"/><rect x="889.38" y="472.65" width="2.75" height="30.35" fill="#4682b4"/><rect x="892.97" y="481.15" width="2.75" height="21.85" fill="#4682b4"/><rect x="896.56" y="490.65" width="2.75" height="12.35" fill="#4682b4"/><rect x="900.15" y="490.65" width="2.75" height="12.35" fill="#4682b4"/><rect x="903.74" y="495.15" width="2.75" height="7.85" fill="#4682b4"/><rect x="907.33" y="489.90" width="2.75" height="13.10" fill="#4682b4"/><rect x="910.92" y="488.90" width="2.75" height="14.10" fill="#4682b4"/></svg>
<div id="close" class="a">CLOSE</div>
</div>
<svg class="a" style="left:0;top:0" width="946" height="588" viewBox="9 5 946 588"><ellipse cx="533.5" cy="68" rx="14.6" ry="17.5" fill="none" stroke="#ff0000" stroke-width="3.5"/><line x1="522.5" y1="81.2" x2="370" y2="108" stroke="#555" stroke-width="1.1"/><path d="M362.3 109.4 L372.6 103 L374.4 113.2Z" fill="#585858"/></svg>
<div class="a" style="left:945px;top:81px;width:2px;height:508px;background:#4a4a4a"></div><div class="a" style="left:275px;top:587px;width:672px;height:2px;background:#4a4a4a"></div><div class="a" style="left:0;top:0;width:947px;height:1px;background:rgba(0,0,0,.22)"></div>
</div>
</body></html>
